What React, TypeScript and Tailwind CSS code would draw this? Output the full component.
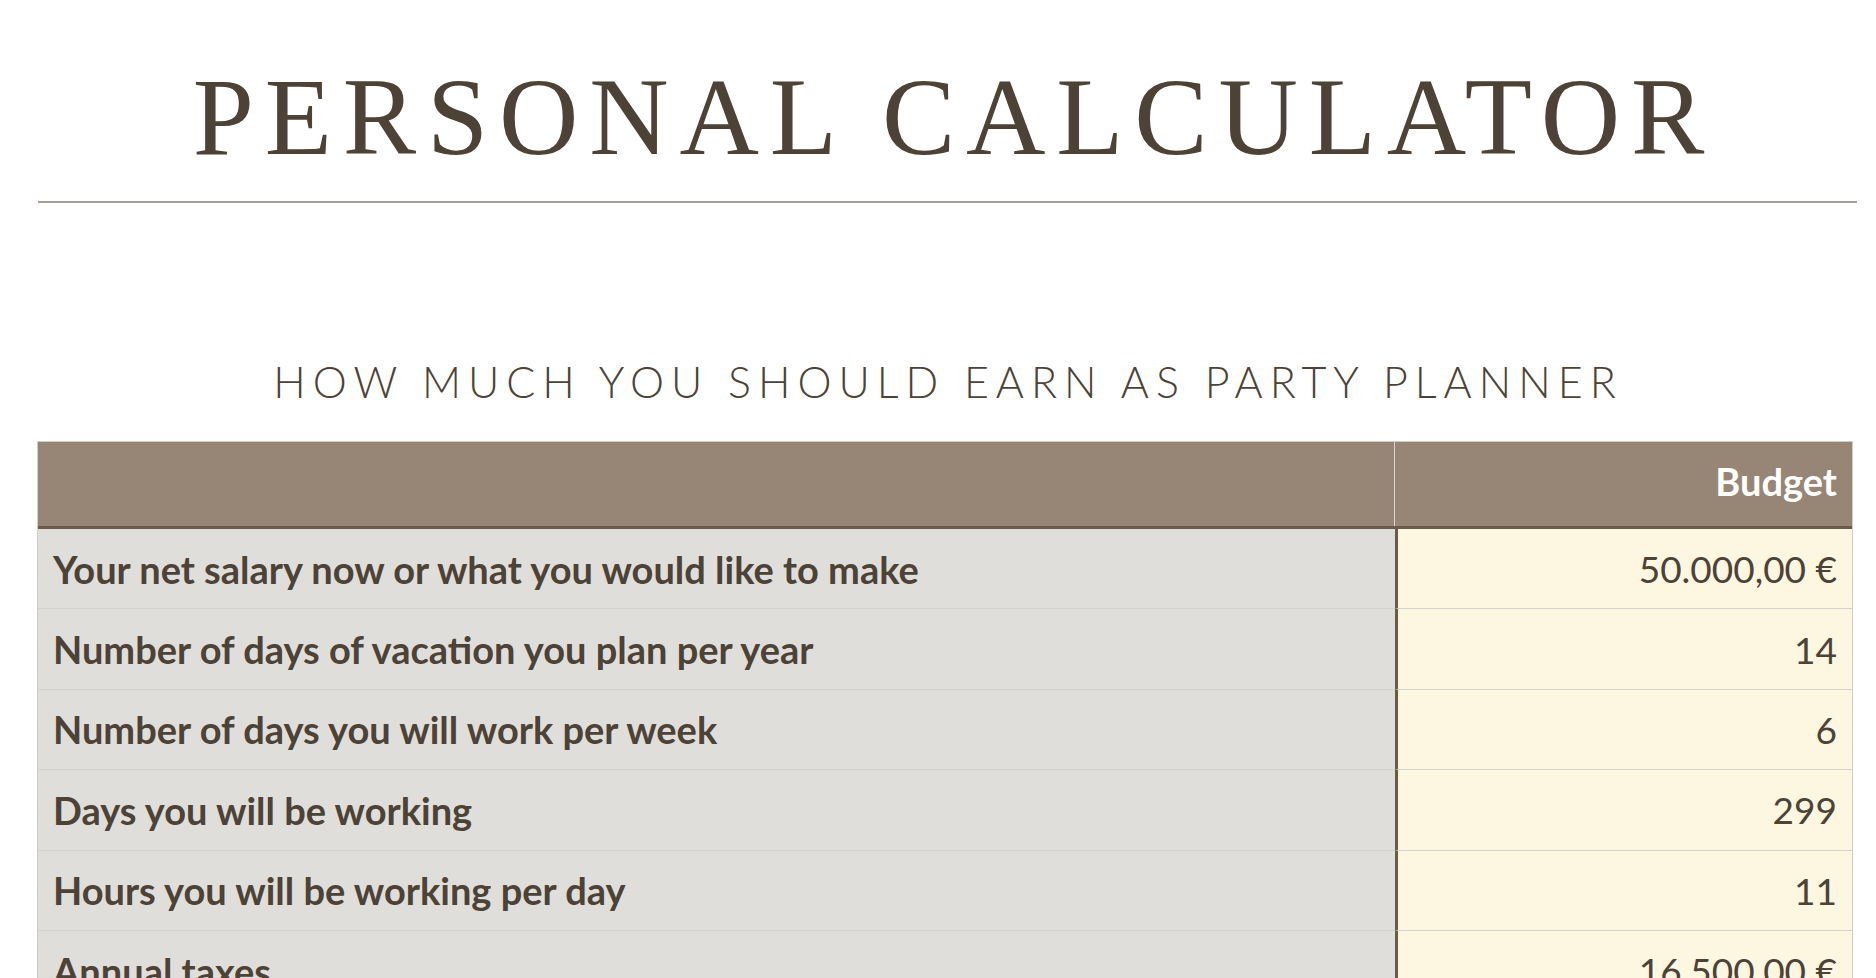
import React from "react";

const rows: [string, string][] = [
  ["Your net salary now or what you would like to make", "50.000,00 €"],
  ["Number of days of vacation you plan per year", "14"],
  ["Number of days you will work per week", "6"],
  ["Days you will be working", "299"],
  ["Hours you will be working per day", "11"],
  ["Annual taxes", "16.500,00 €"],
];

export default function App() {
  return (
    <div className="w-[1876px] h-[978px] overflow-hidden bg-white text-[#4d4236]">
      <div className="pl-[37px] pr-[19px]">
        <div className="pt-[62px] h-[172px] flex justify-center">
          <h1 className="font-['Liberation_Serif',serif] font-normal text-[110px] leading-none tracking-[10.8px] pl-[14px] whitespace-nowrap">
            PERSONAL CALCULATOR
          </h1>
        </div>
        <div className="mt-[29px] ml-[1px] h-[2px] bg-[#a59e97]" />
      </div>
      <div className="pl-[37px] pr-[23px]">
        <div className="pt-[157px] h-[238px] flex justify-center">
          <h2 className="font-['Lato',sans-serif] font-light text-[43px] leading-none tracking-[7px] pl-[6px] whitespace-nowrap">
            HOW MUCH YOU SHOULD EARN AS PARTY PLANNER
          </h2>
        </div>
        <div className="border border-[#cfcbc7] border-b-0">
          <div className="flex h-[87px] bg-[#978675] border-b-[3px] border-[#6b5b49]">
            <div className="flex-1 border-r border-[#d9d4cf]" />
            <div className="w-[457px] flex items-center justify-end pr-[15px] pb-[7px]">
              <span className="font-['Lato',sans-serif] font-bold text-[38px] leading-none text-white">Budget</span>
            </div>
          </div>
          {rows.map(([label, value]) => (
            <div key={label} className="flex h-[80.4px]">
              <div className="flex-1 bg-[#e0dedb] border-b border-[#d5d1cd] flex items-center pl-[15px]">
                <span className="font-['Lato',sans-serif] font-bold text-[38px] leading-none whitespace-nowrap">{label}</span>
              </div>
              <div className="w-[457px] bg-[#fdf6e1] border-l-[3px] border-l-[#6b5b49] border-b border-b-[#d6d2cb] flex items-center justify-end pr-[15px]">
                <span className="font-['Lato',sans-serif] font-normal text-[37px] leading-none whitespace-nowrap">{value}</span>
              </div>
            </div>
          ))}
        </div>
      </div>
    </div>
  );
}
